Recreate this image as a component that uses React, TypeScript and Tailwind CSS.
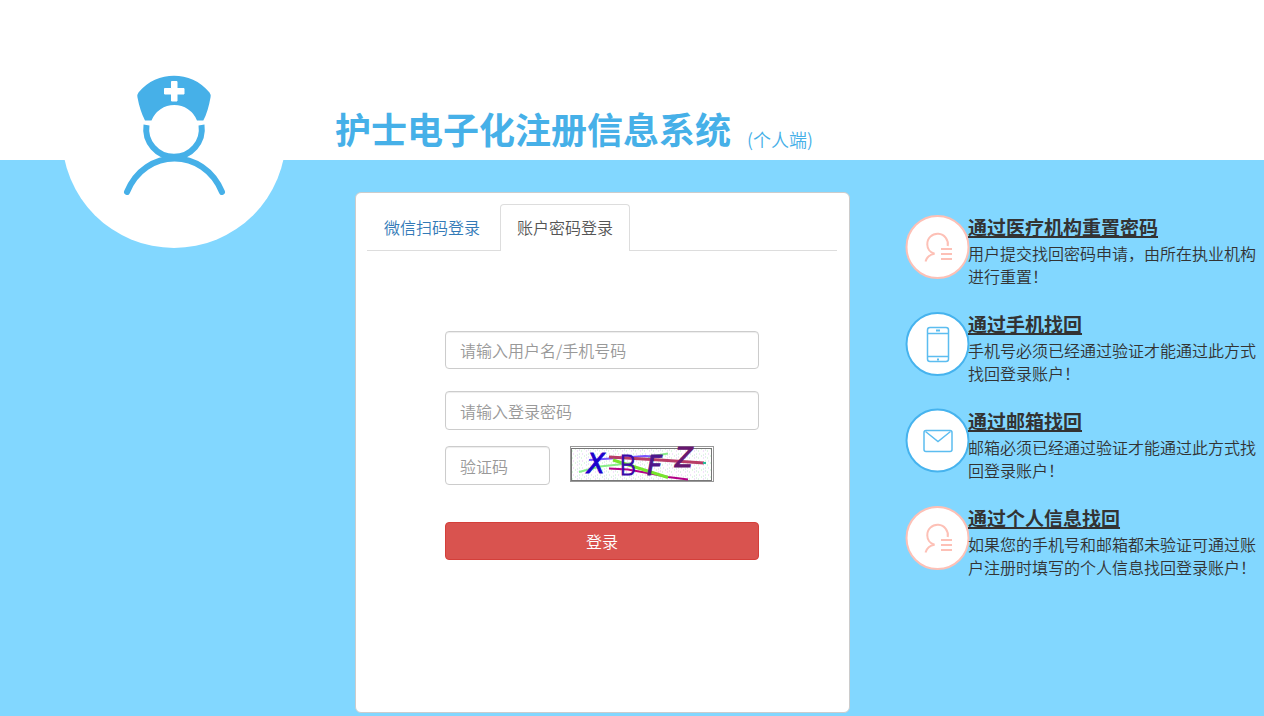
import type { ReactNode } from "react";

function NurseLogo() {
  return (
    <svg viewBox="0 0 224 224" className="size-full" aria-hidden="true">
      <path
        d="M76.500 68.500 C86 57 99 51.800 112 51.800 C125 51.800 138 57 147.500 68.500 Q149 70.500 148.600 73 Q146 88 141.300 96.500 L135 96.500 A24.500 24.500 0 0 0 89.500 96.500 L83 96.500 Q78 87 75.400 73 Q75 70.500 76.500 68.500Z"
        fill="#46b0e8"
      />
      <path d="M109.500 57.500h5.500v7h7v5.500h-7v7h-5.500v-7h-7v-5.500h7z" fill="#fff" stroke="#fff" strokeWidth="1" strokeLinejoin="round" />
      <path d="M84.500 101 A27.800 27.800 0 1 0 139.500 101" fill="none" stroke="#46b0e8" strokeWidth="6" />
      <path d="M65 168 C74 146 93 134.500 112.500 134.500 C132 134.500 151 146 160 168" fill="none" stroke="#46b0e8" strokeWidth="6" strokeLinecap="round" />
    </svg>
  );
}

function PersonIcon() {
  return (
    <svg viewBox="0 0 66 66" className="size-full" fill="none" stroke="#fdc0b6" strokeWidth="2" aria-hidden="true">
      <circle cx="32.500" cy="33" r="31" fill="#fff" />
      <path d="M29.500 39.800 C25 38.500 22.300 34.500 22.300 30.500 A10.300 10.300 0 1 1 42.700 32" />
      <path d="M29.500 39.800 Q22.500 41 20.500 47.500" />
      <path d="M36 35h11M36 40h11M36 45h11" />
    </svg>
  );
}

function PhoneIcon() {
  return (
    <svg viewBox="0 0 66 66" className="size-full" fill="none" stroke="#5cbdf0" strokeWidth="1.500" aria-hidden="true">
      <circle cx="32.500" cy="33" r="31" fill="#fff" stroke="#46b3ee" strokeWidth="2" />
      <rect x="22.500" y="16.500" width="21" height="34" rx="2.500" />
      <path d="M22.500 22.500h21M22.500 45.500h21" />
      <path d="M31 19.500h4M32 48.500h2" strokeWidth="2" />
    </svg>
  );
}

function MailIcon() {
  return (
    <svg viewBox="0 0 66 66" className="size-full" fill="none" stroke="#5cbdf0" strokeWidth="1.500" aria-hidden="true">
      <circle cx="32.500" cy="32.500" r="31" fill="#fff" stroke="#46b3ee" strokeWidth="2" />
      <rect x="19" y="22.500" width="28" height="21" rx="2" />
      <path d="M20.500 23.500 L33 33.500 L45.500 23.500" />
    </svg>
  );
}

function Captcha() {
  return (
    <svg viewBox="0 0 144 36" className="h-9 w-36 overflow-visible" role="img" aria-label="验证码图片">
      <defs>
        <pattern id="specks" width="9" height="7" patternUnits="userSpaceOnUse">
          <path d="M0 1h1M5 3h1M2 5h1" stroke="#bff0c8" />
          <path d="M3 1h1M7 5h1" stroke="#e6c3f5" />
          <path d="M7 2h1M0 4h1" stroke="#cfd6e6" />
        </pattern>
      </defs>
      <rect x="0.500" y="0.500" width="143" height="35" fill="#fff" stroke="#999" />
      <rect x="2" y="2" width="140" height="33" fill="url(#specks)" />
      <rect x="1.500" y="2.500" width="140" height="32" fill="none" stroke="#777" />
      <path d="M9 26 L30 20.500 L63 17 M78 11 L98 7.500" stroke="#88ed88" strokeWidth="2" fill="none" />
      <path d="M19 14 L48 12 L75 10 L90 11" stroke="#7755ff" strokeWidth="2" fill="none" />
      <path d="M39 11 L90 14 L134 17" stroke="#b83d67" strokeWidth="3" fill="none" />
      <path d="M39 22.500 L58 23.500 L83 28 L98 31 L118 33.500" stroke="#b30086" strokeWidth="2" fill="none" />
      <path d="M43 14 L98 31.500" stroke="#77e52c" strokeWidth="3" fill="none" />
      <path d="M133 17h3" stroke="#25bb9b" strokeWidth="2" />
      <g fontFamily="DejaVu Sans, sans-serif" fontSize="26">
        <text x="17" y="27" fill="#1b00cc" stroke="#1b00cc" fontStyle="italic">X</text>
        <text x="49" y="29" fill="#3a0aaa" stroke="#3a0aaa">B</text>
        <text x="77" y="29" fill="#4c168b" fontStyle="italic" stroke="#4c168b">F</text>
        <text x="105" y="21" fill="#67176f" fontStyle="italic" stroke="#67176f">Z</text>
      </g>
    </svg>
  );
}

const inputStyle =
  "rounded border border-[#ccc] bg-white px-3.5 text-base text-[#555] shadow-[inset_0_1px_1px_rgba(0,0,0,0.075)] placeholder:text-[#999] outline-none";

type RecoveryProps = { icon: ReactNode; title: string; text: string };

function Recovery({ icon, title, text }: RecoveryProps) {
  return (
    <li className="flex items-start">
      <div className="size-[66px] shrink-0">{icon}</div>
      <div className="-ml-[3px] min-w-0">
        <h2 className="mb-0.5 text-[19px] leading-[26px] font-bold">
          <a href="#" className="underline decoration-2 underline-offset-1">{title}</a>
        </h2>
        <p className="text-base leading-[23px] font-[350]">{text}</p>
      </div>
    </li>
  );
}

export default function App() {
  return (
    <div className="min-h-screen bg-[#82d7ff] font-['Noto_Sans_CJK_SC','Open_Sans',sans-serif] text-[#333]">
      <header className="flex h-40 items-start bg-white pl-[62px] text-[#46b0e8]">
        <div className="mt-6 size-56 shrink-0 rounded-full bg-white">
          <NurseLogo />
        </div>
        <div className="mt-[101px] ml-[49px] flex items-end gap-4">
          <h1 className="text-4xl leading-[54px] font-bold">护士电子化注册信息系统</h1>
          <span className="text-lg leading-8 font-[350]">(个人端)</span>
        </div>
      </header>

      <main className="grid grid-cols-[355px_495px_minmax(0,1fr)] items-start pt-8 pb-1">
        <section className="col-start-2 min-h-[521px] rounded-md border border-[#ccc] bg-white py-[11px] pr-3 pl-[11px]">
          <nav className="flex gap-[3px] border-b border-[#ddd] leading-6 font-[350]">
            <a href="#" className="px-[17px] pt-[11px] pb-[11px] text-[#337ab7]">微信扫码登录</a>
            <a href="#" aria-current="page" className="-mb-px rounded-t border border-b-0 border-[#ddd] bg-white px-4 pt-2.5 pb-3 text-[#555]">
              账户密码登录
            </a>
          </nav>
          <form className="mx-auto mt-20 flex w-[314px] flex-col font-[350]" onSubmit={(e) => e.preventDefault()}>
            <input aria-label="用户名/手机号码" placeholder="请输入用户名/手机号码" className={`${inputStyle} h-[38px]`} />
            <input type="password" aria-label="登录密码" placeholder="请输入登录密码" className={`${inputStyle} mt-[22px] h-[39px]`} />
            <div className="mt-4 flex gap-5">
              <input aria-label="验证码" placeholder="验证码" className={`${inputStyle} h-[39px] w-[105px]`} />
              <Captcha />
            </div>
            <button type="submit" className="mt-[37px] h-[38px] rounded border border-[#d43f3a] bg-[#d9534f] text-base text-white">
              登录
            </button>
          </form>
        </section>

        <ul className="flex flex-col gap-[23px] pt-[22px] pl-[55px]">
          <Recovery icon={<PersonIcon />} title="通过医疗机构重置密码" text="用户提交找回密码申请，由所在执业机构进行重置！" />
          <Recovery icon={<PhoneIcon />} title="通过手机找回" text="手机号必须已经通过验证才能通过此方式找回登录账户！" />
          <Recovery icon={<MailIcon />} title="通过邮箱找回" text="邮箱必须已经通过验证才能通过此方式找回登录账户！" />
          <Recovery icon={<PersonIcon />} title="通过个人信息找回" text="如果您的手机号和邮箱都未验证可通过账户注册时填写的个人信息找回登录账户！" />
        </ul>
      </main>
    </div>
  );
}
